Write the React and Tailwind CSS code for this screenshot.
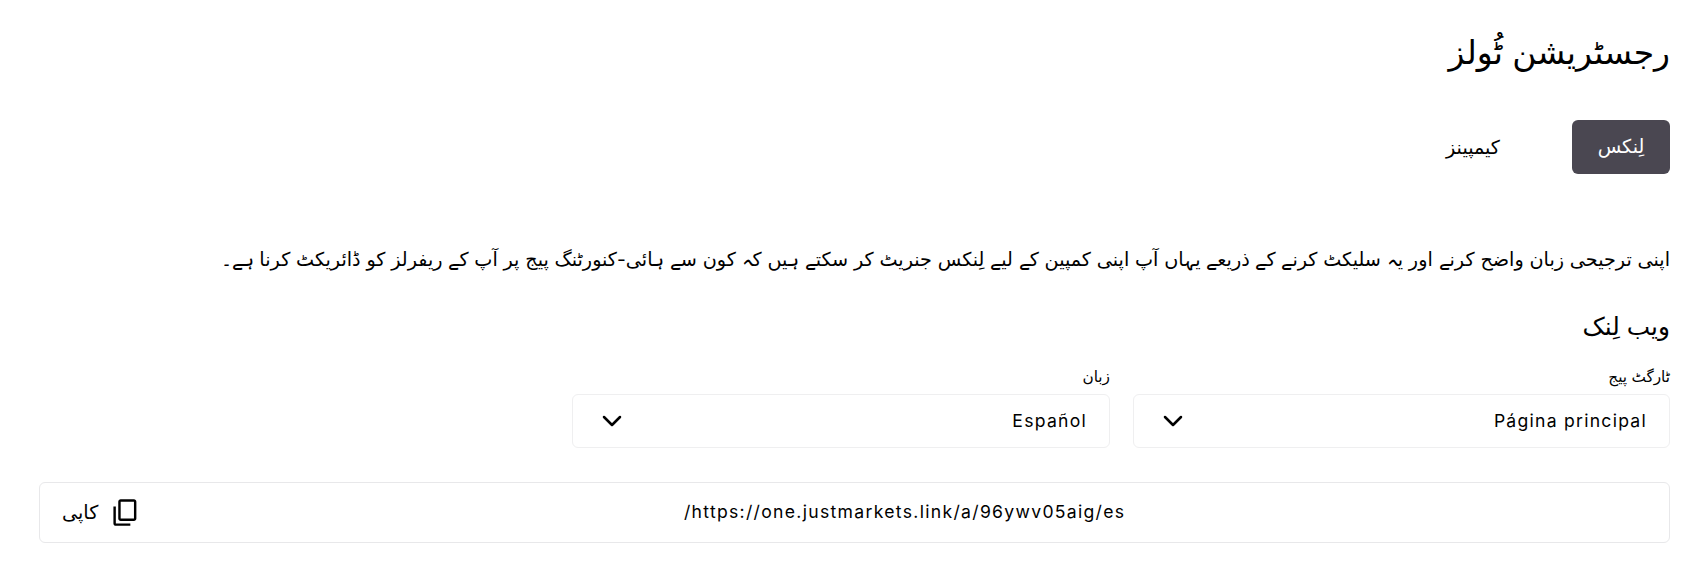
import React from 'react';
import { ChevronDown } from 'lucide-react';

const fields = [
  { label: 'ٹارگٹ پیج', value: 'Página principal' },
  { label: 'زبان', value: 'Español' }
];

const App = () => {
  return (
    <div dir="rtl" className="min-h-[588px] bg-white pr-[31px] pl-[39px] text-black font-['Inter','DejaVu_Sans',sans-serif]">
      <h1 className="pt-7 h-[120px] text-[33px] leading-[48px]">رجسٹریشن ٹُولز</h1>

      <div className="flex items-center gap-[72px]">
        <button className="w-[98px] h-[54px] pb-[2px] rounded-md bg-[#4a4751] text-white text-[19.2px]">لِنکس</button>
        <button className="h-[54px] text-[19.2px]">کیمپینز</button>
      </div>

      <p className="mt-[70px] text-[19.2px] leading-[30px] [word-spacing:0.4px]">
        اپنی ترجیحی زبان واضح کرنے اور یہ سلیکٹ کرنے کے ذریعے یہاں آپ اپنی کمپین کے لیے لِنکس جنریٹ کر سکتے ہیں کہ کون سے ہائی-کنورٹنگ پیج پر آپ کے ریفرلز کو ڈائریکٹ کرنا ہے۔
      </p>

      <h2 className="mt-[34px] text-[24.8px] leading-[36px]">ویب لِنک</h2>

      <div className="mt-[22px] grid grid-cols-[537px_538px] gap-x-[23px]">
        {fields.map((field) => (
          <div key={field.value}>
            <label className="block h-[28px] text-[15.3px] leading-[22px]">{field.label}</label>
            <div className="h-[54px] flex items-center justify-between pr-[22px] pl-[23px] rounded-md border border-[#efeff0] bg-white">
              <span className="text-[17.6px] tracking-[1.25px]">{field.value}</span>
              <ChevronDown className="w-8 h-8" strokeWidth={1.9} />
            </div>
          </div>
        ))}
      </div>

      <div className="mt-[34px] h-[61px] flex items-center rounded-md border border-[#e8e8ea] bg-white pl-[22px]">
        <span className="flex-1 text-center text-[17.6px] tracking-[1.3px]">https://one.justmarkets.link/a/96ywv05aig/es/</span>
        <button className="flex items-center gap-[13px] text-[19.2px]">
          <svg viewBox="0 0 24 24" className="w-[29px] h-[29px] -scale-y-100" fill="currentColor">
            <path d="M16 1H4c-1.1 0-2 .9-2 2v14h2V3h12V1zm3 4H8c-1.1 0-2 .9-2 2v14c0 1.1.9 2 2 2h11c1.1 0 2-.9 2-2V7c0-1.1-.9-2-2-2zm0 16H8V7h11v14z" />
          </svg>
          <span>کاپی</span>
        </button>
      </div>
    </div>
  );
};

export default App;
